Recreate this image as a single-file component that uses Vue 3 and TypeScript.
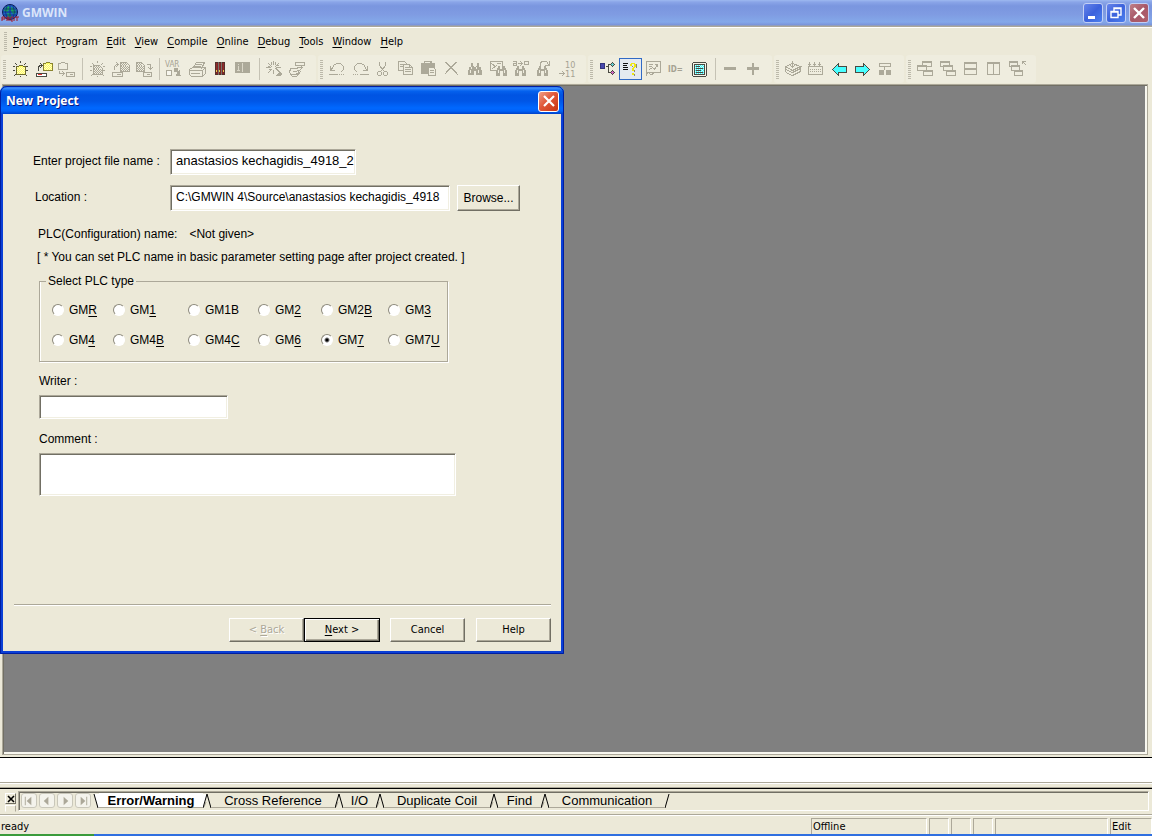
<script setup lang="ts">
import { ref } from 'vue'

interface Part {
  d: string
  s?: string
  f?: string
}
interface Label {
  x: number
  y: number
  t: string
  size: number
  bold?: boolean
}
interface Tool {
  name: string
  parts?: Part[]
  labels?: Label[]
  active?: boolean
  sep?: boolean
}

const G = '#aca999'
const K = '#4a4a42'
const line = (d: string, s = G): Part => ({ d, s })
const area = (d: string, f = G, s = G): Part => ({ d, f, s })

// Every second pixel of a row or block, filled one by one.
const dither = (x: number, y: number, w: number, h: number, c = G): Part => {
  let d = ''
  for (let j = 0; j < h; j++) {
    for (let i = j % 2; i < w; i += 2) d += `M${x + i - 0.5} ${y + j - 0.5}h1v1h-1z`
  }
  return { d, f: c }
}

const rays = 'M11 3v1M6 5l1 1M16 5l-1 1M4 8l1 0M18 8l-1 0M4 12h1M18 12h-1M5 17l1-1M17 17l-1-1M11 18v0'
const binoculars = (x: number, y: number): Part[] => [
  area(`M${x + 3} ${y}h1v3h1v8h-5v-4h1v-3h2z`),
  area(`M${x + 9} ${y}h1v4h2v3h1v4h-5v-8h1z`),
  area(`M${x + 5} ${y + 4}h3v3h-3z`),
  line(`M${x + 3} ${y + 4}v1M${x + 2} ${y + 7}v2M${x + 8} ${y + 4}v1M${x + 10} ${y + 7}v2`, '#efeddf'),
]
const smallBinoculars = (x: number, y: number): Part[] => [
  area(`M${x + 2} ${y}h1v9h-3v-5h1v-2h1z`),
  area(`M${x + 7} ${y}h1v2h1v2h1v5h-3z`),
  area(`M${x + 4} ${y + 3}h2v1h-2z`),
  line(`M${x + 2} ${y + 4}v2M${x + 8} ${y + 4}v2`, '#efeddf'),
]
const win = (x: number, y: number, w = 9, h = 5): Part[] => [
  area(`M${x} ${y}h${w}v${h}h-${w}z`, '#efeddf'),
  line(`M${x} ${y + 1}h${w}`),
]

const bands: Tool[][] = [
  [
    { name: 'New project', parts: [line(rays, K), area('M7 8h2l1-1h3l1 1h2v8H7z', '#ffff60', '#6d6a30'), dither(8, 9, 8, 7, '#fff8c8')] },
    { name: 'Open project', parts: [area('M11 5h2l1-1h3l1 1h2v7h-9z', '#ffff60', '#8a8430'), dither(12, 6, 8, 6, '#fff8c8'), line('M6 12V9l1-2h2M8 5l2 2l-2 2', K), area('M4 15h10v3H4z', '#fff', K), line('M6 16h3', '#e03030')] },
    { name: 'Save project', sep: true, parts: [line('M3 5h2l1-1h3l1 1h2v6H3z'), line('M4 13v2h4M7 13l2 2l-2 2'), line('M11 14h8v4h-8z'), line('M15 16h2')] },
    { name: 'New program', parts: [line(rays), line('M7 7h6l3 3v6H7z'), dither(8, 8, 6, 3), dither(8, 11, 8, 5)] },
    { name: 'Open program', parts: [line('M11 4h6l3 3v6h-9z'), dither(12, 5, 6, 3), dither(12, 8, 8, 5), line('M5 11V8l2-2h2M7 4l2 2l-2 2'), line('M3 14h10v4H3z'), line('M8 16h3')] },
    { name: 'Save program', sep: true, parts: [line('M4 4h5l3 3v6H4z'), dither(5, 5, 5, 3), dither(5, 8, 7, 5), line('M15 6h3v4M16 9l2 2l2-2'), line('M11 14h8v4h-8z'), line('M15 16h2')] },
    { name: 'Variables', parts: [area('M3 12h5v5H3z', '#f7f6ee'), area('M11 10h3v3h-3zM13 13l4 4M16 12v5h-3z')], labels: [{ x: 2, y: 9, t: 'VAR', size: 8 }] },
    { name: 'Print', parts: [line('M7 9l3-5h8l-3 6M10 6h5M9 8h5M3 11l3-2h12l1 2v4l-3 3H5l-2-2zM3 12h13l3-3M16 12v5M5 15h8')] },
    { name: 'Library', parts: [area('M6 4h9v12H6z', '#7d2626', '#54302c'), line('M9 4v12M12 4v12', '#77736a'), line('M7 5v6M10 5v6M14 5v6', '#8f2c2c'), line('M7 12v1M10 12v1M14 12v1', '#e8cc50')] },
    { name: 'Information', sep: true, parts: [area('M3 4h14v10H3z'), line('M6 6v0M6 8v4M5 12h2M10 5v8', '#dad7c8')] },
    { name: 'Compile', parts: [line('M10 3v3M10 12v3M5 5l3 3M15 5l-3 3M3 9h4M13 9h4M5 14l3-3M8 4v2M12 4v2M5 8h1M15 7h-1M6 11h1'), line('M12 10l6 6M13 10l5 5'), area('M17 14v3h-4z')] },
    { name: 'Build', parts: [line('M9 4h9v3h-9zM16 7l-2 2M4 10h6l2-1h4l-3 3h-2l2 2l-4 2H6M4 10l-1 4l3 4h4l4-5M7 13h3')] },
  ],
  [
    { name: 'Undo', parts: [line('M4 8v4h4M5 11l3-5l3-1h3l3 3v3l-2 2M3 16h8'), dither(13, 16, 6, 1)] },
    { name: 'Redo', parts: [line('M18 8v4h-4M17 11l-3-5l-3-1H8L5 8v3l2 2M11 16h8'), dither(4, 16, 6, 1)] },
    { name: 'Cut', parts: [line('M7 4v3l4 5M13 4v3l-4 5M6 13h2l1 1v2l-1 1H6l-1-1v-2zM12 13h2l1 1v2l-1 1h-2l-1-1v-2z')] },
    { name: 'Copy', parts: [line('M3 3h6l2 2v7H3zM5 6h3M5 8h3'), area('M8 6h6l3 3v7H8z', '#efeddf'), line('M10 9h3M10 11h5M10 13h5M14 6v3h3')] },
    { name: 'Paste', parts: [area('M3 5h3V3h7v2h3v10H3z'), area('M10 9h5l2 2v6h-7z', '#efeddf'), line('M12 12h3M12 14h3'), line('M7 4h4', '#efeddf')] },
    { name: 'Delete', parts: [line('M4 4l11 11M5 4l10 10M15 4L4 15M14 4L5 13M16 16h0')] },
    { name: 'Find', parts: binoculars(4, 5) },
    { name: 'Find in project', parts: [line('M3 3h12v9H3zM4 5l4 3M5 10l4-3M10 5h3'), ...smallBinoculars(9, 8)] },
    { name: 'Replace', parts: [...smallBinoculars(5, 8), line('M8 5h4M10 3l2 2l-2 2'), line('M3 3h3v4H3v-2h3'), line('M14 3h4v3h-4z')] },
    { name: 'Find next', parts: [...smallBinoculars(4, 8), line('M7 7V4l2-1h4l2 3M16 3v4h-4')] },
    { name: 'Renumber', parts: [line('M3 15h5M6 13l2 2l-2 2')], labels: [{ x: 9, y: 10, t: '10', size: 9 }, { x: 9, y: 19, t: '11', size: 9 }] },
  ],
  [
    { name: 'Project tree', parts: [area('M4 5h4v5H4z', '#4848ae', '#34347c'), line('M10 8h2M12 6v8M13 6h1M13 14h1', K), area('M14 6l2-2l2 2l-2 2z', '#64d0d0', K), line('M15 6h2', '#64d0d0'), area('M14 14l2-2l2 2l-2 2z', '#d064c0', K), line('M15 14h2', '#d064c0')] },
    { name: 'Show messages', active: true, parts: [line('M4 5h4M4 7h3M4 9h4M4 11h4', '#111'), line('M13 8v0M17 6v3M15 12v1M15 16v1', '#8c8c70'), line('M11 7V6l1-1h3l1 1v2l-2 2v2M12 7V6M15 6v2l-2 2v2M13 15h1M13 16h1M12 5h3', '#f0e810')] },
    { name: 'Monitor', parts: [line('M4 3h14v11H4zM7 6h3M7 8h2M7 11l3-2l2 2l3-5M13 6h2v2M4 16l2-2l2 2M4 17v-2M9 16l2-1')] },
    { name: 'Identifier', labels: [{ x: 3, y: 14, t: 'ID=', size: 8, bold: true }] },
    { name: 'Output window', sep: true, parts: [area('M5 4h12l1 1v12l-1 1H5l-1-1V5z', '#f4f4e8', K), area('M6 6h10v10H6z', '#40f4f4', K), dither(7, 7, 9, 9, '#c8ffff'), line('M8 8h3M8 10h6M8 12h4M8 14h6', K)] },
    { name: 'Zoom out', parts: [area('M5 9h11v2H5z')] },
    { name: 'Zoom in', parts: [area('M5 9h11v2H5zM10 5h1v11h-1z')] },
  ],
  [
    { name: 'Download', parts: [line('M3 8l7-3l8 3l-8 4zM3 10l2 2l5 2l8-4M3 13l2 2l5 2l8-4M3 8v5M10 3v5M8 7l2 2l2-2M18 8v5')] },
    { name: 'Memory', parts: [line('M3 8h14v8H3zM4 4v3M9 4v3M14 4v3M3 6h2M8 6h2M13 6h2'), dither(5, 11, 11, 1), dither(5, 13, 11, 1)] },
    { name: 'Back', parts: [area('M4 11l6-6v3h8v6h-8v3z', '#48ffff', K)] },
    { name: 'Forward', parts: [area('M18 11l-6-6v3H4v6h8v3z', '#48ffff', K)] },
    { name: 'Hierarchy', parts: [line('M5 5h11v3H5zM10 9v2'), area('M5 12h4v4H5zM12 12h4v4h-4z')] },
  ],
  [
    { name: 'Tile', parts: [...win(8, 3), ...win(3, 7), ...win(9, 12)] },
    { name: 'Cascade', parts: [...win(3, 3), ...win(6, 7), ...win(9, 12)] },
    { name: 'Tile horizontally', parts: [...win(4, 4, 12, 6), ...win(4, 10, 12, 6)] },
    { name: 'Tile vertically', parts: [...win(4, 4, 6, 12), ...win(10, 4, 6, 12)] },
    { name: 'Restore windows', parts: [...win(3, 3, 8), ...win(5, 7, 8), ...win(8, 12, 8), line('M16 3h3M16 3v2M17 4l2 2')] },
  ],
]

const menus = ['_Project', 'P_rogram', '_Edit', '_View', '_Compile', '_Online', '_Debug', '_Tools', '_Window', '_Help'].map(split)

function split(text: string) {
  const i = text.indexOf('_')
  return i < 0
    ? { a: text, u: '', b: '' }
    : { a: text.slice(0, i), u: text[i + 1], b: text.slice(i + 2) }
}

const plcTypes = ['GM_R', 'GM_1', 'GM1B', 'GM_2', 'GM2_B', 'GM_3', 'GM_4', 'GM4_B', 'GM4_C', 'GM_6', 'GM_7', 'GM7_U']
  .map((t) => ({ value: t.replace('_', ''), ...split(t) }))

const selected = ref('GM7')
const fileName = ref('anastasios kechagidis_4918_2')
const location = ref('C:\\GMWIN 4\\Source\\anastasios kechagidis_4918')
const writer = ref('')
const comment = ref('')

const tabs = ['Error/Warning', 'Cross Reference', 'I/O', 'Duplicate Coil', 'Find', 'Communication']
const activeTab = ref(0)
const navIcons = [
  { name: 'First tab', d: 'M3 3h1v9h-1zM10 3v9l-5-4.500z' },
  { name: 'Previous tab', d: 'M9 3v9l-5-4.500z' },
  { name: 'Next tab', d: 'M6 3v9l5-4.500z' },
  { name: 'Last tab', d: 'M5 3v9l5-4.500zM11 3h1v9h-1z' },
]
</script>

<template>
  <div class="app">
    <header class="titlebar">
      <svg class="logo" width="18" height="18" viewBox="0 0 18 18" aria-hidden="true">
        <circle cx="9" cy="8" r="7.500" fill="#1c62c8" stroke="#0a1c58" />
        <path d="M4 4l4-2l1 3l-3 3l-3-1zM10 3l4 2l1 4l-3 1l-2-3zM6 9l4 1v4l-3-1z" fill="#1aa85a" />
        <path d="M3 5h12M2 8h14M3 11h12M6 2q-3 6 0 12M12 2q3 6 0 12M9 1v14" stroke="#123078" stroke-width=".8" fill="none" />
        <path d="M1 13v4M1 13h3v2h-3M6 17v-4h2v4M6 15h2M12 13h-2v4h2M13 17v-4M14 13h4M16 13v4" stroke="#a01828" fill="none" />
      </svg>
      <h1>GMWIN</h1>
      <div class="window-buttons">
        <button class="wbtn" aria-label="Minimize"><svg width="18" height="18" viewBox="0 0 18 18"><path d="M4 12h7v3H4z" fill="#fff" /></svg></button>
        <button class="wbtn" aria-label="Restore"><svg width="18" height="18" viewBox="0 0 18 18"><path d="M7 7V4h7v7h-3M7 4.500h7M4 7.500h7v6H4zM4 8h7" fill="none" stroke="#fff" stroke-width="1.400" /></svg></button>
        <button class="wbtn wclose" aria-label="Close"><svg width="18" height="18" viewBox="0 0 18 18"><path d="M4 4l10 10M14 4L4 14" stroke="#fff" stroke-width="2.400" /></svg></button>
      </div>
    </header>

    <nav class="menubar">
      <span class="grip"></span>
      <button v-for="m in menus" :key="m.a + m.u + m.b">{{ m.a }}<u>{{ m.u }}</u>{{ m.b }}</button>
    </nav>

    <div class="toolbars">
      <div v-for="(band, bi) in bands" :key="bi" class="band">
        <span class="grip"></span>
        <template v-for="tool in band" :key="tool.name">
          <button class="tool" :class="{ active: tool.active }" :aria-label="tool.name">
            <svg width="23" height="22" viewBox="0 0 23 22" shape-rendering="crispEdges">
              <g transform="translate(0.5 0.5)" stroke-linecap="square">
                <path v-for="(p, pi) in tool.parts" :key="pi" :d="p.d" :fill="p.f ?? 'none'" :stroke="p.s ?? 'none'" />
              </g>
              <text v-for="l in tool.labels" :key="l.t" :x="l.x" :y="l.y" :font-size="l.size" class="tool-text" :class="{ bold: l.bold }">{{ l.t }}</text>
            </svg>
          </button>
          <span v-if="tool.sep" class="tool-sep"></span>
        </template>
      </div>
    </div>

    <main class="workspace"></main>

    <div class="output"></div>

    <div class="tabdock">
      <div class="dock-side">
        <button aria-label="Close panel"><svg width="8" height="8" viewBox="0 0 8 8"><path d="M1 1l6 6M7 1L1 7" stroke="#000" stroke-width="1.600" /></svg></button>
        <span class="dock-grip"></span>
      </div>
      <div class="tabstrip">
        <div class="tab-nav">
          <button v-for="n in navIcons" :key="n.name" :aria-label="n.name">
            <svg width="14" height="14" viewBox="0 0 15 15"><path :d="n.d" fill="#aca899" /></svg>
          </button>
        </div>
        <div class="tabs" role="tablist">
          <svg width="6" height="16" viewBox="0 0 6 16" aria-hidden="true"><path d="M1 1h5v14h-1z" fill="#fff" /><path d="M1 1l4 14" stroke="#000" fill="none" /></svg>
          <template v-for="(t, i) in tabs" :key="t">
            <button role="tab" :aria-selected="activeTab === i" :class="{ current: activeTab === i }" @click="activeTab = i">{{ t }}</button>
            <svg width="8" height="16" viewBox="0 0 8 16" aria-hidden="true">
              <path v-if="activeTab === i" d="M0 1h4l-3 14h-1z" fill="#fff" />
              <path v-if="i < tabs.length - 1" d="M3 9l-2 5" stroke="#aca899" fill="none" />
              <path d="M4 1l-4 14" stroke="#000" fill="none" />
              <path v-if="i < tabs.length - 1" d="M4 1l4 14" stroke="#000" fill="none" />
            </svg>
          </template>
        </div>
      </div>
    </div>

    <footer class="statusbar">
      <span class="ready">ready</span>
      <span class="pane">Offline</span>
      <span class="pane"></span>
      <span class="pane"></span>
      <span class="pane"></span>
      <span class="pane"></span>
      <span class="pane">Edit</span>
    </footer>
    <div class="taskbar"><span></span></div>

    <section class="dialog" role="dialog" aria-labelledby="dialog-title">
      <header class="dialog-title">
        <h2 id="dialog-title">New Project</h2>
        <button class="dialog-close" aria-label="Close"><svg width="18" height="18" viewBox="0 0 18 18"><path d="M4 4l10 10M14 4L4 14" stroke="#fff" stroke-width="2.200" /></svg></button>
      </header>
      <form class="dialog-body" @submit.prevent>
        <div class="row">
          <label for="file-name">Enter project file name :</label>
          <input id="file-name" v-model="fileName" class="sunken name" type="text" spellcheck="false" />
        </div>
        <div class="row">
          <label for="location" class="inset">Location :</label>
          <input id="location" v-model="location" class="sunken location" type="text" spellcheck="false" />
          <button type="button" class="raised browse">Browse...</button>
        </div>
        <p class="plc-name"><span>PLC(Configuration) name:</span><span>&lt;Not given&gt;</span></p>
        <p class="hint">[ * You can set PLC name in basic parameter setting page after project created. ]</p>
        <fieldset>
          <legend>Select PLC type</legend>
          <label v-for="p in plcTypes" :key="p.value">
            <input v-model="selected" type="radio" name="plc" :value="p.value" />
            <span>{{ p.a }}<u v-if="p.u">{{ p.u }}</u>{{ p.b }}</span>
          </label>
        </fieldset>
        <div class="stack">
          <label for="writer">Writer :</label>
          <input id="writer" v-model="writer" class="sunken writer" type="text" />
        </div>
        <div class="stack">
          <label for="comment">Comment :</label>
          <textarea id="comment" v-model="comment" class="sunken comment"></textarea>
        </div>
        <div class="actions">
          <button type="button" class="raised" disabled>&lt; <u>B</u>ack</button>
          <button type="submit" class="raised default"><u>N</u>ext &gt;</button>
          <button type="button" class="raised cancel">Cancel</button>
          <button type="button" class="raised">Help</button>
        </div>
      </form>
    </section>
  </div>
</template>

<style>
body {
  margin: 0;
  background: #ece9d8;
}
</style>

<style scoped>
.app {
  position: relative;
  display: flex;
  flex-direction: column;
  min-height: 100vh;
  overflow: hidden;
  background: #ece9d8;
  color: #000;
  font: 11px/14px "DejaVu Sans Condensed", "Liberation Sans", sans-serif;
}
.app * {
  box-sizing: border-box;
}
button {
  margin: 0;
  padding: 0;
  border: 0;
  background: none;
  color: inherit;
  font: inherit;
}
svg {
  display: block;
}
h1,
h2 {
  margin: 0;
  font: bold 12px/16px "Open Sans", sans-serif;
}

.titlebar {
  display: flex;
  align-items: center;
  height: 28px;
  padding: 0 3px 2px 1px;
  border-bottom: 1px solid #fff;
  background: linear-gradient(#9db9f0 0, #8aa5e8 2px, #7a96df 6px, #7f9be2 14px, #84a8e9 22px, #7a93da 25px, #aca899 26px);
}
.titlebar h1 {
  flex: 1;
  margin-left: 3px;
  color: #dbe5fa;
}
.window-buttons {
  display: flex;
  gap: 3px;
}
.wbtn {
  width: 20px;
  height: 20px;
  border: 1px solid #c2cff5;
  border-radius: 3px;
  background: linear-gradient(135deg, #6684ea, #3c62dc 50%, #4c80ee);
}
.wclose {
  background: linear-gradient(135deg, #c08088, #a85868 50%, #b0606c);
}

.grip {
  width: 3px;
  height: 19px;
  background: repeating-linear-gradient(#bcb9aa 0 1px, transparent 1px 2px);
}
.menubar {
  display: flex;
  align-items: center;
  gap: 9px;
  height: 27px;
  padding-left: 4px;
}
.menubar .grip {
  margin-right: -3px;
}
.menubar button {
  line-height: 18px;
}
u {
  text-underline-offset: 2px;
}

.toolbars {
  display: flex;
  gap: 2px;
  height: 29px;
  padding: 0 0 1px 1px;
}
.band {
  display: flex;
  align-items: center;
  padding: 0 7px 0 2px;
  border-radius: 3px;
  background: #efeddf;
}
.band .grip {
  margin-right: 3px;
}
.tool {
  width: 23px;
  height: 22px;
}
.tool.active {
  background: #e5eaf0;
  box-shadow: inset 0 0 0 1px #316ac5;
}
.tool-text {
  fill: #a5a292;
  font-family: "DejaVu Sans Condensed", sans-serif;
}
.tool-text.bold {
  font-weight: bold;
}
.tool-sep {
  width: 1px;
  height: 22px;
  margin: 0 3px 0 4px;
  background: #c5c2b4;
}

.workspace {
  flex: 1;
  margin: 0 4px 0 2px;
  border: 1px solid #aca899;
  background: #808080;
  box-shadow: inset 1px 1px #716f64, inset -2px -2px #f8f7ef;
}
.output {
  height: 30px;
  margin-top: 2px;
  border-top: 1px solid #000;
  border-bottom: 3px solid #ece9d8;
  background: #fff;
  box-shadow: inset 0 -1px #fff, inset 0 -2px #aca899;
}
.tabdock {
  display: flex;
  gap: 2px;
  height: 28px;
  padding: 3px 3px 2px 5px;
  border-top: 1px solid #aca899;
  border-bottom: 1px solid #aca899;
  box-shadow: inset 0 1px #000;
}
.dock-side {
  display: flex;
  flex-direction: column;
  gap: 1px;
  width: 11px;
  padding-top: 2px;
}
.dock-side button {
  flex: none;
  display: grid;
  place-items: center;
  height: 11px;
  border: 1px solid;
  border-color: #fff #716f64 #716f64 #fff;
}
.dock-grip {
  height: 7px;
  border: 1px solid;
  border-color: #fff #aca899 transparent #fff;
}
.tabstrip {
  flex: 1;
  display: flex;
  gap: 2px;
  height: 20px;
  padding-left: 2px;
  border: 1px solid;
  border-color: #aca899 #fff #fff #aca899;
  box-shadow: inset 1px 1px #716f64;
}
.tab-nav {
  display: flex;
  gap: 2px;
  padding-top: 1px;
}
.tab-nav button {
  display: grid;
  place-items: center;
  width: 16px;
  height: 15px;
  border: 1px solid #c9c7ba;
  border-radius: 3px;
  background: #f4f3ec;
}
.tabs {
  display: grid;
  grid-template-columns: 6px 104px 8px 124px 8px 33px 8px 106px 8px 43px 8px 116px 8px;
  height: 17px;
  padding-top: 1px;
  font: 13px/15px "Liberation Sans", Arial, sans-serif;
}
.tabs button {
  height: 15px;
  border-bottom: 1px solid #aca899;
  line-height: 15px;
  white-space: nowrap;
}
.tabs button.current {
  background: #fff;
  font-weight: bold;
}

.statusbar {
  display: grid;
  grid-template-columns: 1fr 116px 20px 20px 20px 113px 42px;
  gap: 2px;
  height: 19px;
  padding-top: 2px;
  border-top: 1px solid #fff;
}
.ready {
  padding: 2px 1px 0;
}
.pane {
  padding: 1px 0 0 1px;
  border: 1px solid;
  border-color: #aca899 #fff #fff #aca899;
}
.taskbar {
  height: 2px;
  background: #2f6fe0;
}
.taskbar span {
  display: block;
  width: 94px;
  height: 2px;
  background: #3a9a3a;
}

.dialog {
  position: absolute;
  top: 86px;
  left: 0;
  width: 564px;
  border: 3px solid #0a3fd6;
  border-top: 0;
  border-radius: 7px 7px 0 0;
  background: #ece9d8;
  outline: 1px solid #001ea0;
  outline-offset: -1px;
  font: 12px/14px "Liberation Sans", Arial, sans-serif;
}
.dialog-title {
  display: flex;
  align-items: center;
  justify-content: space-between;
  height: 28px;
  margin: 0 -3px;
  padding: 2px 5px 0 6px;
  border-radius: 6px 6px 0 0;
  background: linear-gradient(#0a4fd8 0, #3f92ff 2px, #0562ee 5px, #0054e3 9px, #0056e6 15px, #0068ff 22px, #0062f8 25px, #0040c8 28px);
  color: #fff;
}
.dialog-title h2 {
  text-shadow: 1px 1px #0a1883;
}
.dialog-close {
  width: 21px;
  height: 21px;
  padding-left: 1px;
  border: 1px solid #fff;
  border-radius: 3px;
  background: linear-gradient(135deg, #f0a088, #e0583a 45%, #c83410);
}
.dialog-body {
  padding: 35px 10px 9px 11px;
}
.sunken {
  display: block;
  margin: 0;
  padding: 0 5px 3px;
  border: 1px solid;
  border-color: #aca899 #fff #fff #aca899;
  border-radius: 0;
  outline: 0;
  background: #fff;
  box-shadow: inset 1px 1px #716f64, inset -1px -1px #f1efe2;
  color: #000;
  font: inherit;
}
.row {
  display: flex;
  align-items: center;
  height: 26px;
  margin: 0 0 10px 19px;
}
.row label {
  width: 137px;
  padding-bottom: 2px;
  white-space: nowrap;
}
.row label.inset {
  padding-left: 2px;
}
.row .sunken {
  height: 26px;
}
.name {
  width: 186px;
  font-size: 13px;
  padding-right: 0;
}
.location {
  width: 280px;
}
.raised {
  width: 75px;
  height: 24px;
  border: 1px solid;
  border-color: #fff #716f64 #716f64 #fff;
  box-shadow: inset -1px -1px #aca899;
  background: #ece9d8;
}
.browse {
  width: 63px;
  height: 26px;
  margin-left: 7px;
}
p {
  margin: 0 0 9px 24px;
}
.plc-name {
  display: flex;
  gap: 12px;
  margin-top: 16px;
}
.hint {
  margin: 0 0 10px 23px;
}
fieldset {
  display: grid;
  grid-template-columns: 61px 75px 70px 63px 67px 1fr;
  row-gap: 16px;
  width: 409px;
  margin: 0 0 12px 25px;
  padding: 15px 0 14px 12px;
  border: 1px solid #aca899;
  box-shadow: 1px 1px #fff, inset 1px 0 #fff;
}
legend {
  margin-left: -6px;
  padding: 0 2px;
}
fieldset label {
  display: flex;
  align-items: center;
  gap: 5px;
}
fieldset input {
  flex: none;
  appearance: none;
  width: 12px;
  height: 12px;
  margin: 0;
  border: 1px solid;
  border-color: #8c897c #fff #fff #8c897c;
  border-radius: 50%;
  background: #fff;
}
fieldset input:checked {
  background: radial-gradient(circle, #000 1px, #fff 3px);
}
.stack {
  margin: 0 0 13px 25px;
}
.stack label {
  display: block;
  margin-bottom: 7px;
}
.writer {
  width: 189px;
  height: 24px;
}
.comment {
  width: 417px;
  height: 43px;
  resize: none;
}
.actions {
  display: flex;
  justify-content: flex-end;
  margin-top: 108px;
  padding-top: 13px;
  border-top: 1px solid #aca899;
  box-shadow: inset 0 1px #fff;
  font: 11px/14px "DejaVu Sans Condensed", "Liberation Sans", sans-serif;
}
.actions .raised:disabled {
  color: #aca899;
  text-shadow: 1px 1px #fff;
}
.actions .default {
  width: 76px;
  border-color: #000;
  box-shadow: inset 1px 1px #fff, inset -1px -1px #716f64, inset -2px -2px #aca899;
}
.cancel {
  margin: 0 11px 0 10px;
}
</style>
